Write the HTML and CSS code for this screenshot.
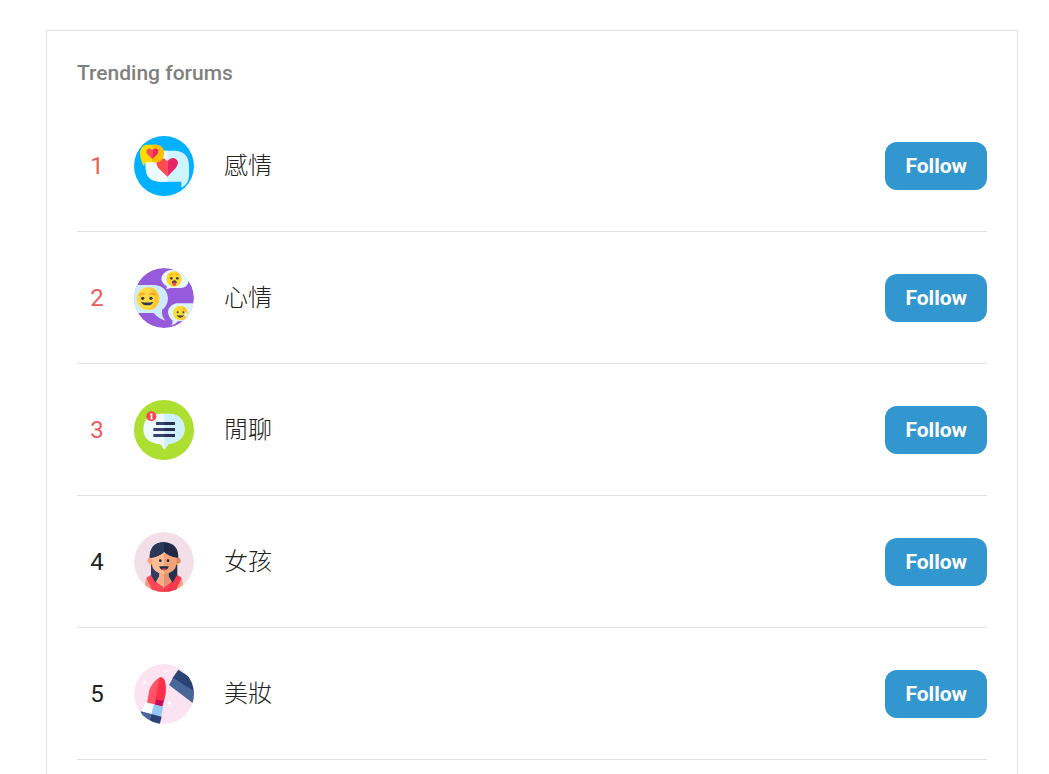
FILE: index.html
```html
<!DOCTYPE html>
<html lang="zh-Hant">
<head>
<meta charset="utf-8">
<meta name="viewport" content="width=device-width, initial-scale=1">
<title>Trending forums</title>
<link rel="stylesheet" href="styles.css">
</head>
<body>
<main class="card">
  <h2 class="card-title">Trending forums</h2>
  <ol class="forums">
    <li class="forum">
      <span class="rank rank-top">1</span>
      <svg class="avatar" viewBox="15 15 180 180" aria-hidden="true">
        <circle cx="105" cy="105" r="90" fill="#00b1ff"/>
        <path d="M50 59H136Q178 60 180 102V138Q177 161 157 170V152H92Q50 151 50 108Z" fill="#cef4ff"/>
        <path d="M50 59H115V152H92Q50 151 50 108Z" fill="#edfcff"/>
        <path d="M115 137L87 110Q77 92 90 83Q105 77 115 91Z" fill="#ff4d4e"/>
        <path d="M115 137L141 110Q153 92 140 83Q125 77 115 91Z" fill="#ea2467"/>
        <path d="M51 41H84Q105 44 105 67Q103 92 82 94H52Q46 97 45 106Q39 100 37 88Q29 65 37 51Q42 43 51 41Z" fill="#ffdd00"/>
        <path d="M71 41H84Q105 44 105 67Q103 92 82 94H71Z" fill="#ffbd06"/>
        <path d="M70 85L54 68Q50 57 58 53Q66 51 70 58Z" fill="#ff4d4e"/>
        <path d="M70 85L86 68Q91 57 83 53Q75 51 70 58Z" fill="#ea2467"/>
      </svg>
      <span class="name">感情</span>
      <button class="follow" type="button">Follow</button>
    </li>
    <li class="forum">
      <span class="rank rank-top">2</span>
      <svg class="avatar" viewBox="15 15 180 180" aria-hidden="true">
        <defs><clipPath id="disc-mood"><circle cx="105" cy="105" r="90"/></clipPath></defs>
        <g clip-path="url(#disc-mood)">
          <circle cx="105" cy="105" r="90" fill="#985adc"/>
          <path d="M15 66H76Q115 70 117 107Q116 127 99 141Q97 159 109 173Q87 166 74 150H15Z" fill="#cdedfc"/>
          <circle cx="57" cy="107" r="34" fill="#ffdb43"/>
          <path d="M57 73A34 34 0 0 1 57 141Q77 128 77 107Q76 84 57 73Z" fill="#ffc52e"/>
          <path d="M30 97Q37 89 47 94M61 94Q71 88 79 97" fill="none" stroke="#ff8b21" stroke-width="4"/>
          <circle cx="41" cy="106" r="5" fill="#323b60"/><circle cx="66" cy="106" r="5" fill="#323b60"/>
          <path d="M36 116Q54 121 73 116Q70 127 55 127Q40 127 36 116Z" fill="#303957"/>
          <path d="M122 21H154Q177 29 180 51Q177 73 157 75H124Q116 77 112 79Q114 75 113 69Q99 62 97 47Q98 29 122 21Z" fill="#e5f8ff"/>
          <circle cx="135" cy="48" r="23" fill="#ffd52e"/>
          <circle cx="127" cy="46" r="4" fill="#3b405d"/><circle cx="145" cy="46" r="4" fill="#3b405d"/>
          <path d="M121 36l9-3M140 33l9 3" stroke="#f49a1f" stroke-width="3"/>
          <ellipse cx="136" cy="58" rx="7" ry="6" fill="#51415d"/>
          <path d="M131 60Q136 56 141 60V67Q136 70 131 67Z" fill="#f24461"/>
          <path d="M142 121H195V175H147Q140 184 127 187Q133 180 130 172Q117 161 117 146Q120 126 142 121Z" fill="#dcf5fd"/>
          <circle cx="154" cy="150" r="22" fill="#ffda34"/>
          <path d="M158 129A22 22 0 0 1 157 172Q169 154 158 129Z" fill="#ffc32c"/>
          <circle cx="146" cy="148" r="3" fill="#3c4264"/><circle cx="163" cy="148" r="3" fill="#3c4264"/>
          <path d="M143 156Q154 159 165 156Q162 164 154 164Q146 164 143 156Z" fill="#3c3a52"/>
          <path d="M169 146Q178 157 172 161Q163 160 169 146Z" fill="#e5fbff"/>
        </g>
      </svg>
      <span class="name">心情</span>
      <button class="follow" type="button">Follow</button>
    </li>
    <li class="forum">
      <span class="rank rank-top">3</span>
      <svg class="avatar" viewBox="15 15 180 180" aria-hidden="true">
        <circle cx="105" cy="105" r="90" fill="#acdf2f"/>
        <path d="M88 56H122Q164 59 167 101Q166 140 119 147L106 164L94 148Q43 143 43 101Q45 60 88 56Z" fill="#edf8ff"/>
        <path d="M106 56H122Q164 59 167 101Q166 140 119 147L106 164Z" fill="#ceefff"/>
        <path d="M81 81H138V90H81ZM73 99H138V108H73ZM73 117H138V126H73Z" fill="#344571"/>
        <path d="M106 81H138V90H106ZM106 99H138V108H106ZM106 117H138V126H106Z" fill="#2a3154"/>
        <circle cx="67" cy="64" r="15" fill="#ff4550"/>
        <path d="M63 57L67 55H70V74H65V60L63 61Z" fill="#fff"/>
      </svg>
      <span class="name">閒聊</span>
      <button class="follow" type="button">Follow</button>
    </li>
    <li class="forum">
      <span class="rank">4</span>
      <svg class="avatar" viewBox="15 15 180 180" aria-hidden="true">
        <defs><clipPath id="disc-girl"><circle cx="105" cy="105" r="90"/></clipPath></defs>
        <g clip-path="url(#disc-girl)">
          <circle cx="105" cy="105" r="90" fill="#f3dfe8"/>
          <path d="M51 156Q60 146 91 142H120Q150 146 159 156L166 195H44Z" fill="#f0a07c"/>
          <path d="M66 76H92V168H66Z" fill="#2d3d63"/>
          <path d="M118 76H145V168H118Z" fill="#26304e"/>
          <path d="M91 131H119V148L129 164L105 195L81 164L91 148Z" fill="#e2926f"/>
          <path d="M91 131H105V195L81 164L91 148Z" fill="#f8ae86"/>
          <circle cx="64" cy="101" r="9" fill="#f8a584"/><circle cx="146" cy="101" r="9" fill="#df8465"/>
          <path d="M68 79H143V109Q140 138 105 141Q71 138 68 109Z" fill="#f0a27a"/>
          <path d="M68 79H105V141Q71 138 68 109Z" fill="#ffbc95"/>
          <path d="M62 92Q62 47 105 45Q149 49 148 92Q122 91 105 75Q89 91 62 92Z" fill="#202a46"/>
          <path d="M62 92Q62 47 105 45V75Q89 91 62 92Z" fill="#2b3858"/>
          <circle cx="94" cy="101" r="4" fill="#222b45"/><circle cx="117" cy="101" r="4" fill="#222b45"/>
          <path d="M91 118H119Q117 129 105 130Q93 129 91 118Z" fill="#242a43"/>
          <path d="M97 126Q105 121 113 126Q105 132 97 126Z" fill="#f84359"/>
          <circle cx="65" cy="111" r="3" fill="#ffc62f"/><circle cx="145" cy="111" r="3" fill="#ffc62f"/>
          <path d="M52 152L66 144L78 165Q90 169 105 183V200H62L66 182Z" fill="#ff4654"/>
          <path d="M158 152L144 144L132 165Q120 169 105 183V200H148L144 182Z" fill="#f73950"/>
        </g>
      </svg>
      <span class="name">女孩</span>
      <button class="follow" type="button">Follow</button>
    </li>
    <li class="forum">
      <span class="rank">5</span>
      <svg class="avatar" viewBox="15 15 180 180" aria-hidden="true">
        <defs><clipPath id="disc-beauty"><circle cx="105" cy="105" r="90"/></clipPath></defs>
        <g clip-path="url(#disc-beauty)">
          <circle cx="105" cy="105" r="90" fill="#fce3f2"/>
          <path d="M148 32L200 66V103L130 58Z" fill="#294474"/>
          <path d="M132 56L200 100V139L120 78Z" fill="#496699"/>
          <path d="M54 132L61 94Q71 65 95 54Q106 58 109 73Q112 94 106 121L100 142Z" fill="#ff5366"/>
          <path d="M92 55Q107 53 109 75Q113 99 105 123L100 142L77 136Z" fill="#fb3048"/>
          <path d="M82 120Q91 126 104 124L99 143L78 137Z" fill="#c40d61"/>
          <path d="M49 130L75 136L67 167L38 157Z" fill="#fff"/>
          <path d="M75 136L103 143L96 173L67 166Z" fill="#91c8f8"/>
          <path d="M36 157L67 165L58 195H26Z" fill="#49669a"/>
          <path d="M67 165L98 173L91 200H57Z" fill="#294474"/>
          <path d="M110 29l2 6 6 2-6 2-2 6-2-6-6-2 6-2zM47 63l2 6 6 2-6 2-2 6-2-6-6-2 6-2zM122 125l2 6 6 2-6 2-2 6-2-6-6-2 6-2z" fill="#fff"/>
        </g>
      </svg>
      <span class="name">美妝</span>
      <button class="follow" type="button">Follow</button>
    </li>
  </ol>
</main>
</body>
</html>
```
FILE: styles.css
```css
* {
  box-sizing: border-box;
}

body {
  display: flex;
  flex-direction: column;
  min-height: 100vh;
  margin: 0;
  padding: 30px 31px 0 46px;
  background: #fff;
  color: #222;
  font-family: Roboto, "Noto Sans CJK TC", sans-serif;
}

.card {
  flex: 1;
  padding: 28px 30px 0;
  border: 1px solid #e2e2e2;
  border-bottom: 0;
}

.card-title {
  margin: 0 0 13px;
  color: #808080;
  font-size: 21px;
  font-weight: 500;
  line-height: 28px;
}

.forums {
  margin: 0;
  padding: 0;
  list-style: none;
}

.forum {
  display: flex;
  align-items: center;
  padding: 36px 0 35px;
  border-bottom: 1px solid #e2e2e2;
}

.rank {
  width: 40px;
  margin-right: 17px;
  font-size: 24px;
  line-height: 32px;
  text-align: center;
}

.rank-top {
  color: #ea5c5c;
}

.avatar {
  flex: none;
  width: 60px;
  height: 60px;
}

.name {
  flex: 1;
  margin-left: 30px;
  font-size: 24px;
  font-weight: 300;
  line-height: 32px;
}

.follow {
  height: 48px;
  padding: 0 20px;
  border: 0;
  border-radius: 12px;
  background: #3397cf;
  color: #fff;
  font-family: Roboto, sans-serif;
  font-size: 21px;
  font-weight: 700;
  line-height: 28px;
  cursor: pointer;
}
```
